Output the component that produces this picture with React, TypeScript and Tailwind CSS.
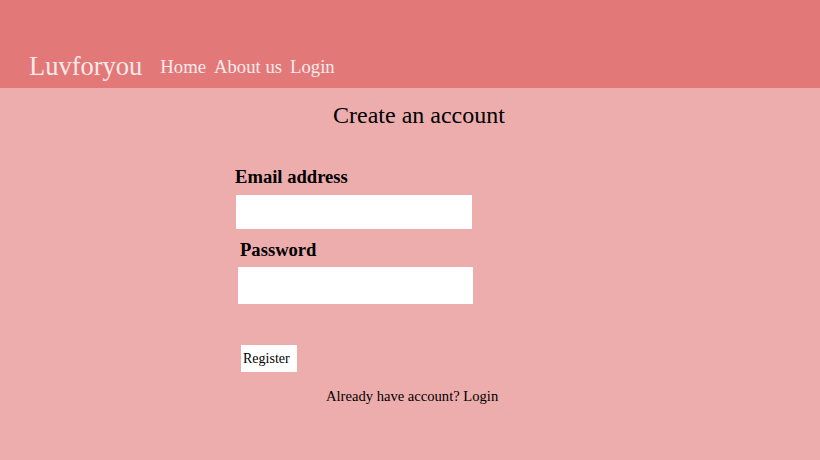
export default function App() {
  return (
    <div className="h-[460px] w-[820px] overflow-hidden bg-[#eeadad] font-['Liberation_Serif',serif] text-black">
      <header className="flex h-[88px] items-end bg-[#e37878] pb-[7px] pl-[29px]">
        <span className="text-[26.5px] leading-[30px] text-[#fbeaea]">Luvforyou</span>
        <nav className="ml-[18px] flex gap-[8px] pb-[3px] text-[18.7px] leading-[22px] text-[#fbeaea]">
          <a>Home</a>
          <a>About us</a>
          <a>Login</a>
        </nav>
      </header>

      <main className="flex flex-col">
        <h1 className="mt-[13px] pl-[333px] text-[24px] leading-[28px]">Create an account</h1>

        <form className="mt-[37px] flex flex-col pl-[235px]">
          <label className="text-[18.6px] font-bold leading-[22px]">Email address</label>
          <input type="email" className="mt-[7px] ml-[1px] h-[34px] w-[236px] bg-white outline-none" />
          <label className="mt-[10px] pl-[5px] text-[18.6px] font-bold leading-[22px]">Password</label>
          <input type="password" className="mt-[6px] ml-[3px] h-[37px] w-[235px] bg-white outline-none" />
          <button
            type="button"
            className="mt-[41px] ml-[6px] h-[27px] w-[56px] bg-white pl-[2px] text-left text-[14px] leading-[27px]"
          >
            Register
          </button>
        </form>

        <p className="mt-[15px] pl-[326px] text-[14.6px] leading-[18px]">Already have account? Login</p>
      </main>
    </div>
  );
}
